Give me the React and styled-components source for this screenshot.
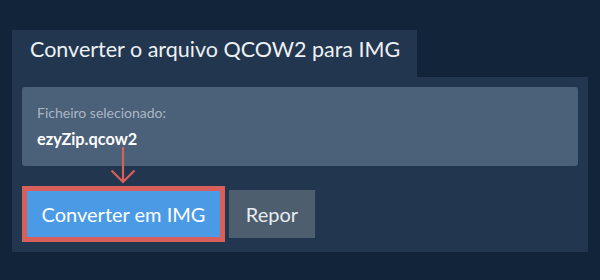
import styled, { createGlobalStyle } from "styled-components";

const GlobalStyle = createGlobalStyle`
  html, body {
    margin: 0;
    padding: 0;
    background: #12243a;
  }
  body {
    width: 600px;
    height: 280px;
    overflow: hidden;
    font-family: Lato, "Open Sans", sans-serif;
  }
`;

export default function App(){
  return (
    <>
      <GlobalStyle />
      <Page>
        <ConverterTab>Converter o arquivo QCOW2 para IMG</ConverterTab>
        <ConverterPanel>
          <SelectedFile>
            <SelectedFileLabel>Ficheiro selecionado:</SelectedFileLabel>
            <SelectedFileName>ezyZip.qcow2</SelectedFileName>
          </SelectedFile>
          <ButtonRow>
            <Highlight>
              {/* seta a apontar para o botão */}
              <PointerArrow width="30" height="37" viewBox="0 0 30 37">
                <path d="M15 0 V35 M3.5 23.5 L15 35 L26.5 23.5" fill="none" stroke="#d95f5a" strokeWidth="2.2" />
              </PointerArrow>
              <ConvertButton>Converter em IMG</ConvertButton>
            </Highlight>
            <ResetButton>Repor</ResetButton>
          </ButtonRow>
        </ConverterPanel>
      </Page>
    </>
  );
}

const Page = styled.div`
  padding: 30px 12px 0 12px;
`;

const ConverterTab = styled.div`
  width: 405px;
  height: 47px;
  box-sizing: border-box;
  padding: 7px 0 0 18px;
  background: #22374f;
  color: #eef1f4;
  font-size: 21.5px;
  line-height: 24px;
  white-space: nowrap;
`;

const ConverterPanel = styled.div`
  width: 576px;
  height: 175px;
  box-sizing: border-box;
  padding: 10px;
  background: #22374f;
`;

const SelectedFile = styled.div`
  height: 79px;
  box-sizing: border-box;
  padding: 17px 15px 0 15px;
  background: #4a6179;
  border-radius: 3px;
`;

const SelectedFileLabel = styled.div`
  color: #aab6c4;
  font-size: 14px;
  line-height: 17px;
`;

const SelectedFileName = styled.div`
  margin-top: 8px;
  color: #ffffff;
  font-size: 16.3px;
  font-weight: bold;
  line-height: 19px;
`;

const ButtonRow = styled.div`
  display: flex;
  align-items: center;
  gap: 4px;
  margin-top: 20px;
`;

const Highlight = styled.div`
  position: relative;
  border: 5px solid #d95f5a;
`;

const PointerArrow = styled.svg`
  position: absolute;
  left: 81px;
  top: -44px;
  display: block;
`;

const ConvertButton = styled.button`
  display: block;
  width: 193px;
  height: 46px;
  border: none;
  margin: 0;
  padding: 0;
  background: #4a9ae5;
  color: #ffffff;
  font-family: Lato, "Open Sans", sans-serif;
  font-size: 20px;
`;

const ResetButton = styled.button`
  width: 86px;
  height: 48px;
  border: none;
  margin: 0;
  padding: 0;
  background: #4d5e6e;
  color: #e8ecf0;
  font-family: Lato, "Open Sans", sans-serif;
  font-size: 20px;
`;
